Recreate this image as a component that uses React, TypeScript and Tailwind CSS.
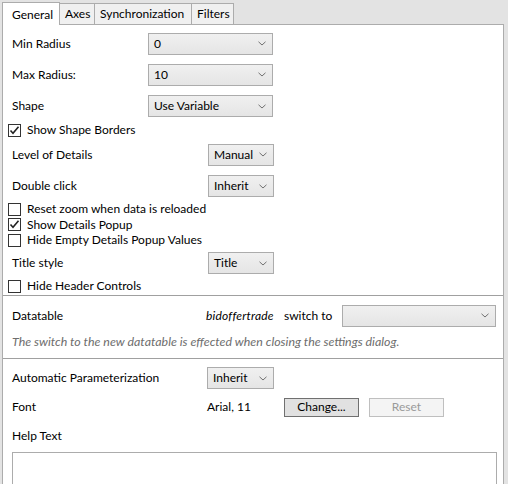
import React from "react";

const Chevron = () => (
  <svg width="8" height="5" viewBox="0 0 8 5" className="shrink-0">
    <path d="M0.5 0.8 L4 4 L7.5 0.8" fill="none" stroke="#707070" strokeWidth="1" />
  </svg>
);

const Combo = ({ value, w }: { value: string; w: string }) => (
  <div
    className={`${w} h-[22px] shrink-0 flex items-center justify-between pl-[5px] pr-[6px] border border-[#acacac] bg-gradient-to-b from-[#f0f0f0] to-[#e5e5e5] text-black`}
  >
    <span>{value}</span>
    <Chevron />
  </div>
);

const Check = ({ checked, label, h }: { checked?: boolean; label: string; h: string }) => (
  <div className={`${h} flex items-center pl-[5px]`}>
    <div className="w-[13px] h-[13px] border border-[#333333] bg-white flex items-center justify-center">
      {checked && (
        <svg width="11" height="11" viewBox="0 0 11 11">
          <path d="M1.5 5.5 L4 8.2 L9.5 1.8" fill="none" stroke="#222" strokeWidth="1.6" />
        </svg>
      )}
    </div>
    <span className="ml-[6px]">{label}</span>
  </div>
);

export default function App() {
  return (
    <div
      className="w-[508px] h-[484px] overflow-hidden bg-[#e3e3e3] pl-[2px] pt-[1px] text-[12px] text-black leading-none"
      style={{ fontFamily: "Lato, 'Noto Sans', sans-serif" }}
    >
      <div className="flex items-end h-[23px]">
        <div className="relative z-10 h-[23px] -mb-px w-[58px] border border-b-0 border-[#acacac] bg-white pl-[9px] pt-[6px]">
          General
        </div>
        <div className="h-[21px] w-[35px] border border-l-0 border-b-0 border-[#acacac] bg-[#f0f0f0] pl-[5px] pt-[4px]">
          Axes
        </div>
        <div className="h-[21px] w-[97px] border border-l-0 border-b-0 border-[#acacac] bg-[#f0f0f0] pl-[5px] pt-[4px]">
          Synchronization
        </div>
        <div className="h-[21px] w-[42px] border border-l-0 border-b-0 border-[#acacac] bg-[#f0f0f0] pl-[5px] pt-[4px]">
          Filters
        </div>
      </div>
      <div className="w-[502px] h-[470px] border border-[#acacac] bg-white pt-[3px]">
        <div className="h-[31px] flex items-center pl-[9px]">
          <span className="w-[136px]">Min Radius</span>
          <Combo value="0" w="w-[125px]" />
        </div>
        <div className="h-[31px] flex items-center pl-[9px]">
          <span className="w-[136px]">Max Radius:</span>
          <Combo value="10" w="w-[125px]" />
        </div>
        <div className="h-[32px] flex items-center pl-[9px]">
          <span className="w-[136px]">Shape</span>
          <Combo value="Use Variable" w="w-[125px]" />
        </div>
        <Check checked label="Show Shape Borders" h="h-[16px]" />
        <div className="h-[33px] flex items-center pl-[9px]">
          <span className="w-[196px]">Level of Details</span>
          <Combo value="Manual" w="w-[66px]" />
        </div>
        <div className="h-[30px] flex items-center pl-[9px]">
          <span className="w-[196px]">Double click</span>
          <Combo value="Inherit" w="w-[66px]" />
        </div>
        <Check label="Reset zoom when data is reloaded" h="h-[16px]" />
        <Check checked label="Show Details Popup" h="h-[15px]" />
        <Check label="Hide Empty Details Popup Values" h="h-[16px]" />
        <div className="h-[30px] flex items-center pl-[9px]">
          <span className="w-[196px]">Title style</span>
          <Combo value="Title" w="w-[66px]" />
        </div>
        <Check label="Hide Header Controls" h="h-[16px]" />
        <div className="h-px bg-[#a0a0a0] mt-[1px]" />
        <div className="h-[38px] flex items-center pl-[9px] pt-[1px]">
          <span className="w-[194px]">Datatable</span>
          <span className="italic w-[78px] tracking-[0.2px]">bidoffertrade</span>
          <span className="w-[58px]">switch to</span>
          <Combo value="" w="w-[154px]" />
        </div>
        <div className="h-[16px] flex items-center pl-[9px] italic text-[12.4px] text-[#6d6d6d]">
          The switch to the new datatable is effected when closing the settings dialog.
        </div>
        <div className="h-px bg-[#a0a0a0] mt-[8px]" />
        <div className="h-[38px] flex items-center pl-[9px]">
          <span className="w-[195px]">Automatic Parameterization</span>
          <Combo value="Inherit" w="w-[67px]" />
        </div>
        <div className="h-[20px] flex items-center pl-[9px]">
          <span className="w-[195px]">Font</span>
          <span className="w-[77px]">Arial, 11</span>
          <div className="w-[75px] h-[19px] border border-[#707070] bg-[#e1e1e1] flex items-center justify-center">
            Change...
          </div>
          <div className="ml-[10px] w-[75px] h-[19px] border border-[#bfbfbf] bg-[#f4f4f4] text-[#9a9a9a] flex items-center justify-center">
            Reset
          </div>
        </div>
        <div className="h-[38px] flex items-center pl-[9px]">Help Text</div>
        <div className="ml-[9px] w-[485px] h-[60px] border border-[#acacac] bg-white mt-[-3px]" />
      </div>
    </div>
  );
}
